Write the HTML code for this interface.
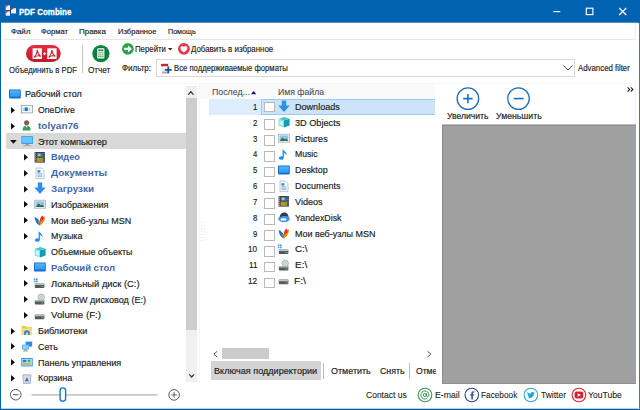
<!DOCTYPE html>
<html><head><meta charset="utf-8"><title>PDF Combine</title>
<style>
*{margin:0;padding:0;box-sizing:border-box}
html,body{width:640px;height:410px;overflow:hidden;background:#fff}
body{font-family:"Liberation Sans",sans-serif;font-size:8.8px;color:#1c1c1c;position:relative}
.a{position:absolute}
.t{position:absolute;white-space:pre;line-height:12px;height:12px;transform-origin:0 50%}
svg{position:absolute;overflow:visible}
</style></head><body>

<div class="a" style="left:0px;top:0px;width:640px;height:410px;background:#0063b1;"></div>
<div class="a" style="left:1px;top:22px;width:637px;height:387px;background:#fff;"></div>
<div class="a" style="left:1px;top:22px;width:637px;height:1px;background:#4a90c8;"></div>
<div class="a" style="left:1px;top:408px;width:638px;height:1px;background:#b2d0e9;"></div>
<div class="a" style="left:637px;top:23px;width:1px;height:385px;background:#fff;"></div>
<div class="a" style="left:638px;top:23px;width:1px;height:386px;background:#fff;"></div>
<div class="t" style="left:18.60px;top:6.47px;font-size:9.1px;color:#fff;transform:scaleX(0.8782);font-weight:bold;-webkit-text-stroke:0.3px #fff;">PDF Combine</div>
<svg style="left:5px;top:5px" width="12" height="11" viewBox="5 5 12 11">
<path d="M9 9L12 11L9 13" stroke="#0a3f86" stroke-width="1.4" fill="none"/>
<rect x="5.7" y="5.3" width="4.3" height="4.7" fill="#f6f2f2"/><path d="M5.5 5.2H8.6L5.5 7.4Z" fill="#d8302e"/>
<rect x="11" y="8.2" width="5" height="5.2" fill="#f6f2f2"/><path d="M10.8 8.1H14.2L10.8 10.3Z" fill="#d8302e"/>
<rect x="5.7" y="11.3" width="4.3" height="4.4" fill="#f6f2f2"/><path d="M5.5 11.2H8.6L5.5 13.4Z" fill="#d8302e"/>
</svg>
<svg style="left:540px;top:0" width="100" height="23" viewBox="0 0 100 23" fill="none" stroke="#fff" stroke-width="1.15">
<path d="M13.4 11.6H20.3"/><rect x="46.3" y="8.2" width="6.6" height="6.4"/><path d="M79.2 8L86.3 15M86.3 8L79.2 15"/></svg>
<div class="t" style="left:10.61px;top:26.05px;font-size:7.9px;color:#1c1c1c;transform:scaleX(0.9953);-webkit-text-stroke:0.17px #1c1c1c;">Файл</div>
<div class="t" style="left:40.92px;top:26.05px;font-size:7.9px;color:#1c1c1c;transform:scaleX(0.9638);-webkit-text-stroke:0.17px #1c1c1c;">Формат</div>
<div class="t" style="left:79.30px;top:26.05px;font-size:7.9px;color:#1c1c1c;transform:scaleX(1.0097);-webkit-text-stroke:0.17px #1c1c1c;">Правка</div>
<div class="t" style="left:117.62px;top:26.05px;font-size:7.9px;color:#1c1c1c;transform:scaleX(0.9629);-webkit-text-stroke:0.17px #1c1c1c;">Избранное</div>
<div class="t" style="left:167.94px;top:26.05px;font-size:7.9px;color:#1c1c1c;transform:scaleX(0.9059);-webkit-text-stroke:0.17px #1c1c1c;">Помощь</div>
<div class="a" style="left:4px;top:39px;width:631px;height:1px;background:#e6e6e6;"></div>
<div class="a" style="left:634.8px;top:23px;width:1px;height:16px;background:#ececec;"></div>
<svg style="left:25.7px;top:45px" width="35" height="17" viewBox="0 0 35 17">
<defs><linearGradient id="pg" x1="0" y1="0" x2="0" y2="1"><stop offset="0" stop-color="#e2313f"/><stop offset="1" stop-color="#c4182a"/></linearGradient></defs>
<rect x="0" y="0" width="34.7" height="17" rx="8.5" fill="url(#pg)"/>
<rect x="6.6" y="3.3" width="9.3" height="10.7" fill="#fff"/><rect x="21.2" y="3.3" width="9.4" height="10.7" fill="#fff"/>
<path d="M8.4 12.2C9.8 10.6 11 8 11.2 5.2C11.6 8 12.6 10 14.4 11.2C12.4 10.4 10.2 10.8 8.4 12.2Z" stroke="#c8202e" stroke-width="1.1" fill="none" stroke-linejoin="round"/>
<path d="M23 12.2C24.4 10.6 25.6 8 25.8 5.2C26.2 8 27.2 10 29 11.2C27 10.4 24.8 10.8 23 12.2Z" stroke="#c8202e" stroke-width="1.1" fill="none" stroke-linejoin="round"/>
<path d="M17.2 8.7H20M18.6 7.3V10.1" stroke="#fff" stroke-width="1"/>
</svg>
<div class="t" style="left:8.61px;top:64.36px;font-size:8.6px;color:#1c1c1c;transform:scaleX(0.8988);-webkit-text-stroke:0.15px #1c1c1c;">Объединить в PDF</div>
<div class="a" style="left:82px;top:44.5px;width:1px;height:28.5px;background:#c4c4c4;"></div>
<svg style="left:91.9px;top:45.3px" width="18" height="18" viewBox="0 0 18 18">
<circle cx="8.9" cy="8.6" r="8.7" fill="#0f8a44"/><circle cx="8.9" cy="8.6" r="7.3" fill="#0b7b3a"/>
<rect x="5.2" y="3.3" width="7.2" height="10.2" rx="0.9" fill="#fff"/>
<rect x="6.1" y="4.5" width="5.4" height="1.7" fill="#2f8f58"/>
<path d="M6.1 7.9H11.5M6.1 9.8H11.5M6.1 11.7H11.5" stroke="#5aa87a" stroke-width="1.2"/>
<path d="M7.9 7.2V12.4M9.7 7.2V12.4" stroke="#fff" stroke-width="0.5"/>
</svg>
<div class="t" style="left:88.29px;top:64.36px;font-size:8.6px;color:#1c1c1c;transform:scaleX(0.9495);-webkit-text-stroke:0.15px #1c1c1c;">Отчет</div>
<svg style="left:121.6px;top:43.2px" width="12" height="12" viewBox="0 0 12 12">
<circle cx="5.9" cy="5.9" r="5.9" fill="#2ea44a"/>
<path d="M2.2 4.7H6V2.6L10 5.9L6 9.2V7.1H2.2Z" fill="#fff"/></svg>
<div class="t" style="left:134.91px;top:43.15px;font-size:8.3px;color:#1c1c1c;transform:scaleX(0.9405);-webkit-text-stroke:0.15px #1c1c1c;">Перейти</div>
<svg style="left:167.6px;top:48.3px" width="5" height="3" viewBox="0 0 5 3"><path d="M0 0H4.4L2.2 2.6Z" fill="#222"/></svg>
<svg style="left:177.9px;top:43.1px" width="12" height="12" viewBox="0 0 12 12">
<circle cx="5.9" cy="5.9" r="5.9" fill="#e8364d"/>
<path d="M5.9 9.6C3.6 7.8 2.4 6.6 2.4 5.1C2.4 3.9 3.3 3.1 4.3 3.1C5 3.1 5.6 3.5 5.9 4.1C6.2 3.5 6.8 3.1 7.5 3.1C8.5 3.1 9.4 3.9 9.4 5.1C9.4 6.6 8.2 7.8 5.9 9.6Z" fill="#fff"/></svg>
<div class="t" style="left:191.21px;top:43.15px;font-size:8.3px;color:#1c1c1c;transform:scaleX(0.9517);-webkit-text-stroke:0.15px #1c1c1c;">Добавить в избранное</div>
<div class="t" style="left:121.80px;top:62.15px;font-size:8.3px;color:#1c1c1c;transform:scaleX(0.9617);-webkit-text-stroke:0.15px #1c1c1c;">Фильтр:</div>
<div class="a" style="left:156px;top:59px;width:419px;height:18px;background:#fff;border:1px solid #d9d9d9"></div>
<svg style="left:160px;top:62.6px" width="12" height="11" viewBox="0 0 12 11">
<path d="M1.5 0.5H8.5V10.5H2.5Z" fill="#f3f3f3" stroke="#ccc" stroke-width="0.5"/>
<rect x="1" y="1" width="7" height="2.2" fill="#c9232f"/>
<rect x="2" y="8.6" width="6" height="1.6" fill="#aaa"/>
<path d="M8.3 3.5V10.3M4.9 6.9H11.7" stroke="#1b4f9c" stroke-width="1.8"/>
</svg>
<div class="t" style="left:174.02px;top:62.15px;font-size:8.3px;color:#1c1c1c;transform:scaleX(0.9276);-webkit-text-stroke:0.15px #1c1c1c;">Все поддерживаемые форматы</div>
<svg style="left:562.5px;top:64.5px" width="10" height="6" viewBox="0 0 10 6"><path d="M0.5 0.5L5 5L9.5 0.5" fill="none" stroke="#444" stroke-width="1"/></svg>
<div class="t" style="left:578.11px;top:62.15px;font-size:8.3px;color:#1c1c1c;transform:scaleX(0.9443);-webkit-text-stroke:0.15px #1c1c1c;">Advanced filter</div>
<div class="a" style="left:1px;top:83px;width:634.5px;height:1px;background:#f5f5f5;"></div>
<div class="a" style="left:635px;top:83px;width:1px;height:42px;background:#f3f3f3;"></div>
<div class="a" style="left:6.3px;top:133.2px;width:180px;height:15.8px;background:#d9d9d9;"></div>
<svg style="left:8.60px;top:88.70px" width="12" height="10.6" viewBox="0 0 12 10.6"><rect x="0" y="0.6" width="11.8" height="8.8" rx="0.8" fill="#1570c8"/><rect x="1" y="1.5" width="9.8" height="6" fill="#35a4fa"/><rect x="1" y="1.5" width="9.8" height="2.4" fill="#4ab0fc"/></svg>
<div class="t" style="left:24.55px;top:88.37px;font-size:9.4px;color:#1c1c1c;transform:scaleX(0.9663);-webkit-text-stroke:0.17px #1c1c1c;">Рабочий стол</div>
<svg style="left:11px;top:106.78px" width="5" height="7" viewBox="0 0 5 7"><path d="M0 0L4 3.2L0 6.4Z" fill="#111"/></svg>
<svg style="left:21.20px;top:104.48px" width="12" height="10.6" viewBox="0 0 12 10.6"><rect x="0.3" y="1.3" width="11" height="7.6" fill="#fdfdfd" stroke="#8a8a8a" stroke-width="0.7"/><rect x="3.6" y="3.4" width="3.2" height="3.6" fill="#1d6fd8"/><rect x="7.6" y="3.4" width="2" height="3.6" fill="#c8d4e4"/><rect x="1.6" y="3.4" width="1.4" height="3.6" fill="#c8d4e4"/></svg>
<div class="t" style="left:37.86px;top:104.15px;font-size:9.4px;color:#1c1c1c;transform:scaleX(0.9285);-webkit-text-stroke:0.17px #1c1c1c;">OneDrive</div>
<svg style="left:11px;top:122.56px" width="5" height="7" viewBox="0 0 5 7"><path d="M0 0L4 3.2L0 6.4Z" fill="#111"/></svg>
<svg style="left:21.20px;top:120.26px" width="12" height="10.6" viewBox="0 0 12 10.6"><circle cx="5.6" cy="2.8" r="2.5" fill="#8a5a3c"/><path d="M1.6 10.4C1.6 6.8 3.4 5.4 5.6 5.4C7.8 5.4 9.6 6.8 9.6 10.4Z" fill="#3a9a5c"/><path d="M4.4 5.6L5.6 8L6.8 5.6Z" fill="#e8e8e8"/></svg>
<div class="t" style="left:37.80px;top:119.93px;font-size:9.4px;color:#4565aa;transform:scaleX(1.0691);font-weight:bold;">tolyan76</div>
<svg style="left:9.8px;top:139.74px" width="7" height="4" viewBox="0 0 7 4"><path d="M0 0H6.8L3.4 3.8Z" fill="#111"/></svg>
<svg style="left:21.20px;top:136.04px" width="12" height="10.6" viewBox="0 0 12 10.6"><rect x="0.4" y="0" width="11.6" height="8" rx="0.6" fill="#3aa0ee"/><rect x="1.2" y="0.8" width="10" height="6" fill="#6ec4fa"/><rect x="4.4" y="8" width="3.6" height="1.2" fill="#8aa"/><rect x="2.2" y="9.2" width="8" height="0.9" fill="#9ab"/></svg>
<div class="t" style="left:37.84px;top:135.71px;font-size:9.4px;color:#1c1c1c;transform:scaleX(0.9838);-webkit-text-stroke:0.17px #1c1c1c;">Этот компьютер</div>
<svg style="left:24.4px;top:154.12px" width="5" height="7" viewBox="0 0 5 7"><path d="M0 0L4 3.2L0 6.4Z" fill="#111"/></svg>
<svg style="left:34.40px;top:151.82px" width="12" height="10.6" viewBox="0 0 12 10.6"><rect x="0.6" y="0" width="10.4" height="10.6" fill="#3c3c40"/><rect x="2.6" y="0.9" width="6.4" height="4.1" fill="#2a6ad8"/><rect x="2.6" y="5.7" width="6.4" height="4.1" fill="#d88a1a"/><rect x="3.8" y="1.7" width="2.8" height="2.4" fill="#e8c03a"/><rect x="5.4" y="6.5" width="2.8" height="2.2" fill="#3ac05a"/><path d="M1.1 1.2H2M1.1 3.2H2M1.1 5.2H2M1.1 7.2H2M1.1 9.2H2M9.6 1.2H10.5M9.6 3.2H10.5M9.6 5.2H10.5M9.6 7.2H10.5M9.6 9.2H10.5" stroke="#ddd" stroke-width="0.8"/></svg>
<div class="t" style="left:50.74px;top:151.49px;font-size:9.4px;color:#4565aa;transform:scaleX(0.9809);font-weight:bold;">Видео</div>
<svg style="left:24.4px;top:169.90px" width="5" height="7" viewBox="0 0 5 7"><path d="M0 0L4 3.2L0 6.4Z" fill="#111"/></svg>
<svg style="left:34.40px;top:167.60px" width="12" height="10.6" viewBox="0 0 12 10.6"><path d="M2 0H7.6L10 2.4V10.6H2Z" fill="#fbfbfb" stroke="#a8b4c0" stroke-width="0.7"/><rect x="3.4" y="2.2" width="3" height="2.4" fill="#3a8ae0"/><path d="M3.4 5.8H8.4M3.4 7.2H8.4M3.4 8.6H8.4" stroke="#7aa8d8" stroke-width="0.8"/></svg>
<div class="t" style="left:50.70px;top:167.27px;font-size:9.4px;color:#4565aa;transform:scaleX(1.0637);font-weight:bold;">Документы</div>
<svg style="left:24.4px;top:185.68px" width="5" height="7" viewBox="0 0 5 7"><path d="M0 0L4 3.2L0 6.4Z" fill="#111"/></svg>
<svg style="left:34.40px;top:183.38px" width="12" height="10.6" viewBox="0 0 12 10.6"><path d="M3.8 -0.4H8.2V4.6H11.8L6 11L0.2 4.6H3.8Z" fill="#2f8fe6"/></svg>
<div class="t" style="left:50.71px;top:183.05px;font-size:9.4px;color:#4565aa;transform:scaleX(1.0530);font-weight:bold;">Загрузки</div>
<svg style="left:24.4px;top:201.46px" width="5" height="7" viewBox="0 0 5 7"><path d="M0 0L4 3.2L0 6.4Z" fill="#111"/></svg>
<svg style="left:34.40px;top:199.16px" width="12" height="10.6" viewBox="0 0 12 10.6"><rect x="0.3" y="1.2" width="11.2" height="8" fill="#f4f4f4" stroke="#9aa" stroke-width="0.7"/><rect x="1.6" y="2.4" width="8.6" height="5.6" fill="#8ec4ee"/><path d="M1.6 8L4.6 4.6L7 6.6L8.4 5.6L10.2 8Z" fill="#3a6a4a"/></svg>
<div class="t" style="left:50.74px;top:198.83px;font-size:9.4px;color:#1c1c1c;transform:scaleX(0.9772);-webkit-text-stroke:0.17px #1c1c1c;">Изображения</div>
<svg style="left:24.4px;top:217.24px" width="5" height="7" viewBox="0 0 5 7"><path d="M0 0L4 3.2L0 6.4Z" fill="#111"/></svg>
<svg style="left:34.40px;top:214.94px" width="12" height="10.6" viewBox="0 0 12 10.6"><path d="M5.8 10.4C3 9.4 1 6 0.6 2.2C3 2.6 5 4.6 5.8 7Z" fill="#2a6ae0"/><path d="M5.8 10.4C8.6 9.4 10.8 6 11.2 1.6C8.6 2.2 6.4 4.4 5.8 7Z" fill="#f08a1a"/><path d="M5.8 7C5.4 4.6 6.6 1.6 8.6 0.4C9.4 1.6 10 3 9.6 4.2Z" fill="#e8302a"/><path d="M5.8 10.4C4.6 9.4 3.4 7.4 3.6 5.2C4.8 5.6 5.6 6.4 5.8 7.6Z" fill="#3ab04a"/></svg>
<div class="t" style="left:50.75px;top:214.61px;font-size:9.4px;color:#1c1c1c;transform:scaleX(0.9547);-webkit-text-stroke:0.17px #1c1c1c;">Мои веб-узлы MSN</div>
<svg style="left:24.4px;top:233.02px" width="5" height="7" viewBox="0 0 5 7"><path d="M0 0L4 3.2L0 6.4Z" fill="#111"/></svg>
<svg style="left:34.40px;top:230.72px" width="12" height="10.6" viewBox="0 0 12 10.6"><path d="M4.6 -0.2C5.2 2 9.2 2.6 8.4 6.6C7.8 5 6.8 4.2 5.9 4V8.4C5.9 9.8 4.6 10.8 3.1 10.8C1.8 10.8 0.9 10.1 0.9 9.1C0.9 8 2 7.2 3.3 7.2C3.8 7.2 4.2 7.3 4.6 7.5Z" fill="#1e8ef0"/></svg>
<div class="t" style="left:50.76px;top:230.39px;font-size:9.4px;color:#1c1c1c;transform:scaleX(0.9459);-webkit-text-stroke:0.17px #1c1c1c;">Музыка</div>
<svg style="left:34.40px;top:246.50px" width="12" height="10.6" viewBox="0 0 12 10.6"><path d="M0.6 2L6 3.2V10.6L0.6 8.6Z" fill="#86dfe8"/><path d="M6 3.2L11.6 1.8V8.4L6 10.6Z" fill="#149cb2"/><path d="M0.6 2L6.2 0.1L11.6 1.8L6 3.2Z" fill="#3fc6d6"/><path d="M1.6 3.5L5 4.2V8.8L1.6 7.7Z" fill="#c8f2f6"/></svg>
<div class="t" style="left:50.76px;top:246.17px;font-size:9.4px;color:#1c1c1c;transform:scaleX(0.9442);-webkit-text-stroke:0.17px #1c1c1c;">Объемные объекты</div>
<svg style="left:24.4px;top:264.58px" width="5" height="7" viewBox="0 0 5 7"><path d="M0 0L4 3.2L0 6.4Z" fill="#111"/></svg>
<svg style="left:34.40px;top:262.28px" width="12" height="10.6" viewBox="0 0 12 10.6"><rect x="0" y="0.6" width="11.8" height="8.8" rx="0.8" fill="#1570c8"/><rect x="1" y="1.5" width="9.8" height="6" fill="#35a4fa"/><rect x="1" y="1.5" width="9.8" height="2.4" fill="#4ab0fc"/></svg>
<div class="t" style="left:50.73px;top:261.95px;font-size:9.4px;color:#4565aa;transform:scaleX(1.0100);font-weight:bold;">Рабочий стол</div>
<svg style="left:24.4px;top:280.36px" width="5" height="7" viewBox="0 0 5 7"><path d="M0 0L4 3.2L0 6.4Z" fill="#111"/></svg>
<svg style="left:34.40px;top:278.06px" width="12" height="10.6" viewBox="0 0 12 10.6"><rect x="0.8" y="5.4" width="9.6" height="4.6" rx="0.7" fill="#55595d"/><rect x="0.8" y="5.4" width="9.6" height="1.6" rx="0.6" fill="#c0c4c8"/><rect x="7.6" y="8" width="2" height="1" fill="#3ad04a"/><rect x="-0.2" y="0.4" width="1.7" height="1.7" fill="#35a8f0"/><rect x="2" y="0.4" width="1.7" height="1.7" fill="#35a8f0"/><rect x="-0.2" y="2.6" width="1.7" height="1.7" fill="#35a8f0"/><rect x="2" y="2.6" width="1.7" height="1.7" fill="#35a8f0"/></svg>
<div class="t" style="left:50.73px;top:277.73px;font-size:9.4px;color:#1c1c1c;transform:scaleX(0.9982);-webkit-text-stroke:0.17px #1c1c1c;">Локальный диск (C:)</div>
<svg style="left:24.4px;top:296.14px" width="5" height="7" viewBox="0 0 5 7"><path d="M0 0L4 3.2L0 6.4Z" fill="#111"/></svg>
<svg style="left:34.40px;top:293.84px" width="12" height="10.6" viewBox="0 0 12 10.6"><rect x="0.8" y="6" width="9.6" height="4.4" rx="0.7" fill="#55595d"/><rect x="0.8" y="6" width="9.6" height="1.5" rx="0.6" fill="#b4b8bc"/><rect x="7.6" y="8.5" width="2" height="1" fill="#3ad04a"/><circle cx="7.2" cy="3.3" r="3.2" fill="#dcdee2" stroke="#8a8e92" stroke-width="0.6"/><circle cx="7.2" cy="3.3" r="1.1" fill="#fff" stroke="#8a8e92" stroke-width="0.5"/></svg>
<div class="t" style="left:50.75px;top:293.51px;font-size:9.4px;color:#1c1c1c;transform:scaleX(0.9659);-webkit-text-stroke:0.17px #1c1c1c;">DVD RW дисковод (E:)</div>
<svg style="left:24.4px;top:311.92px" width="5" height="7" viewBox="0 0 5 7"><path d="M0 0L4 3.2L0 6.4Z" fill="#111"/></svg>
<svg style="left:34.40px;top:309.62px" width="12" height="10.6" viewBox="0 0 12 10.6"><rect x="0.8" y="4.6" width="9.6" height="4.6" rx="0.7" fill="#55595d"/><rect x="0.8" y="4.6" width="9.6" height="1.6" rx="0.6" fill="#c0c4c8"/><rect x="7.6" y="7.2" width="2" height="1" fill="#3ad04a"/></svg>
<div class="t" style="left:50.72px;top:309.29px;font-size:9.4px;color:#1c1c1c;transform:scaleX(1.0314);-webkit-text-stroke:0.17px #1c1c1c;">Volume (F:)</div>
<svg style="left:11px;top:327.70px" width="5" height="7" viewBox="0 0 5 7"><path d="M0 0L4 3.2L0 6.4Z" fill="#111"/></svg>
<svg style="left:21.20px;top:325.40px" width="12" height="10.6" viewBox="0 0 12 10.6"><path d="M0.6 1H4.4L5.4 2.2H11V10H0.6Z" fill="#f2c648"/><rect x="0.6" y="3.2" width="10.4" height="6.8" fill="#f9dc74"/><path d="M3 10V6.6L5.9 5L8.8 6.6V10H6.9V7.8H4.9V10Z" fill="#2a8ae8"/></svg>
<div class="t" style="left:37.84px;top:325.07px;font-size:9.4px;color:#1c1c1c;transform:scaleX(0.9701);-webkit-text-stroke:0.17px #1c1c1c;">Библиотеки</div>
<svg style="left:11px;top:343.48px" width="5" height="7" viewBox="0 0 5 7"><path d="M0 0L4 3.2L0 6.4Z" fill="#111"/></svg>
<svg style="left:21.20px;top:341.18px" width="12" height="10.6" viewBox="0 0 12 10.6"><rect x="4.6" y="0.6" width="6.6" height="5" fill="#2a8ae8"/><rect x="1" y="3.6" width="7" height="5" fill="#5ab0f4"/><rect x="1.8" y="4.3" width="5.4" height="3.4" fill="#8ad0fa"/><rect x="3.2" y="8.6" width="2.6" height="1" fill="#789"/><rect x="2" y="9.6" width="5" height="0.8" fill="#89a"/></svg>
<div class="t" style="left:37.85px;top:340.85px;font-size:9.4px;color:#1c1c1c;transform:scaleX(0.9481);-webkit-text-stroke:0.17px #1c1c1c;">Сеть</div>
<svg style="left:11px;top:359.26px" width="5" height="7" viewBox="0 0 5 7"><path d="M0 0L4 3.2L0 6.4Z" fill="#111"/></svg>
<svg style="left:21.20px;top:356.96px" width="12" height="10.6" viewBox="0 0 12 10.6"><rect x="0.3" y="1" width="11.4" height="8.4" fill="#2a8ae8"/><rect x="1.2" y="1.9" width="9.6" height="6.6" fill="#bfe2fa"/><rect x="2" y="2.8" width="3.4" height="2.4" fill="#2a7ad0"/><circle cx="8" cy="4" r="1.4" fill="#3ab05a"/><rect x="2" y="6" width="7.6" height="1.6" fill="#e8a02a"/></svg>
<div class="t" style="left:37.85px;top:356.63px;font-size:9.4px;color:#1c1c1c;transform:scaleX(0.9669);-webkit-text-stroke:0.17px #1c1c1c;">Панель управления</div>
<svg style="left:11px;top:375.04px" width="5" height="7" viewBox="0 0 5 7"><path d="M0 0L4 3.2L0 6.4Z" fill="#111"/></svg>
<svg style="left:21.20px;top:372.74px" width="12" height="10.6" viewBox="0 0 12 10.6"><path d="M1.8 1.8H10L9.3 10.4H2.5Z" fill="#d6dade" stroke="#98a0a8" stroke-width="0.7"/><path d="M5.9 4.2L8 8.2H3.8Z" fill="#2a7ae0"/></svg>
<div class="t" style="left:37.85px;top:372.41px;font-size:9.4px;color:#1c1c1c;transform:scaleX(0.9596);-webkit-text-stroke:0.17px #1c1c1c;">Корзина</div>
<div class="a" style="left:185.9px;top:86px;width:10.9px;height:295.5px;background:#f0f0f0;"></div>
<div class="a" style="left:185.9px;top:98px;width:10.9px;height:232px;background:#cdcdcd;"></div>
<svg style="left:188.4px;top:90.6px" width="6" height="4" viewBox="0 0 6 4"><path d="M0.3 3.6L2.9 0.8L5.5 3.6" fill="none" stroke="#333" stroke-width="1.3"/></svg>
<svg style="left:188.6px;top:373.8px" width="6" height="4" viewBox="0 0 6 4"><path d="M0.3 0.4L2.7 3L5.1 0.4" fill="none" stroke="#333" stroke-width="1.2"/></svg>
<div class="a" style="left:199px;top:84px;width:1px;height:300px;background:#f6f6f6;"></div>
<svg style="left:0;top:384px" width="200" height="24" viewBox="0 384 200 24">
<path d="M31.5 394.8H157.6" stroke="#c9c9c9" stroke-width="1.8"/>
<circle cx="15.75" cy="394.7" r="5.3" fill="#fff" stroke="#505c6a" stroke-width="1"/><path d="M13 394.7H18.5" stroke="#5a6472" stroke-width="1.1"/>
<circle cx="174.1" cy="394.9" r="5.3" fill="#fff" stroke="#505c6a" stroke-width="1"/><path d="M171.3 394.9H176.9M174.1 392.1V397.7" stroke="#5a6472" stroke-width="1"/>
<rect x="60.1" y="387.9" width="5.5" height="13.3" rx="2.6" fill="#fff" stroke="#0a78d6" stroke-width="1.4"/>
</svg>
<div class="a" style="left:200px;top:84px;width:235.4px;height:15.4px;background:#fafafa;"></div>
<div class="t" style="left:212.46px;top:86.17px;font-size:9.2px;color:#4a4f5a;transform:scaleX(0.9560);-webkit-text-stroke:0.1px #4a4f5a;">Послед...</div>
<svg style="left:251.4px;top:90.5px" width="6" height="4" viewBox="0 0 6 4"><path d="M0 3.2L2.65 0L5.3 3.2Z" fill="#12128c"/></svg>
<div class="t" style="left:278.07px;top:86.17px;font-size:9.2px;color:#4a4f5a;transform:scaleX(0.9453);-webkit-text-stroke:0.1px #4a4f5a;">Имя файла</div>
<div class="a" style="left:209px;top:99.4px;width:226.3px;height:15.6px;background:#ddedfd;"></div>
<div class="a" style="left:261.4px;top:99.4px;width:173.9px;height:15.6px;background:#cce4fa;border-top:1px solid #9ccbf2;border-bottom:1px solid #9ccbf2;border-left:1px solid #9ccbf2"></div>
<div class="t" style="left:252.91px;top:100.92px;font-size:9.4px;color:#1c1c1c;transform:scaleX(0.8196);-webkit-text-stroke:0.17px #1c1c1c;">1</div>
<div class="a" style="left:264px;top:101.75px;width:11px;height:10.7px;background:#fff;border:1px solid #b9b9b9"></div>
<svg style="left:277.70px;top:101.35px" width="12" height="10.6" viewBox="0 0 12 10.6"><path d="M3.8 -0.4H8.2V4.6H11.8L6 11L0.2 4.6H3.8Z" fill="#2f8fe6"/></svg>
<div class="t" style="left:294.55px;top:100.92px;font-size:9.4px;color:#1c1c1c;transform:scaleX(0.9652);-webkit-text-stroke:0.17px #1c1c1c;">Downloads</div>
<div class="t" style="left:252.91px;top:116.75px;font-size:9.4px;color:#1c1c1c;transform:scaleX(0.8196);-webkit-text-stroke:0.17px #1c1c1c;">2</div>
<div class="a" style="left:264px;top:119.28px;width:11px;height:10.7px;background:#fff;border:1px solid #b9b9b9"></div>
<svg style="left:277.70px;top:117.18px" width="12" height="10.6" viewBox="0 0 12 10.6"><path d="M0.6 2L6 3.2V10.6L0.6 8.6Z" fill="#86dfe8"/><path d="M6 3.2L11.6 1.8V8.4L6 10.6Z" fill="#149cb2"/><path d="M0.6 2L6.2 0.1L11.6 1.8L6 3.2Z" fill="#3fc6d6"/><path d="M1.6 3.5L5 4.2V8.8L1.6 7.7Z" fill="#c8f2f6"/></svg>
<div class="t" style="left:294.54px;top:116.75px;font-size:9.4px;color:#1c1c1c;transform:scaleX(0.9763);-webkit-text-stroke:0.17px #1c1c1c;">3D Objects</div>
<div class="t" style="left:252.91px;top:132.58px;font-size:9.4px;color:#1c1c1c;transform:scaleX(0.8196);-webkit-text-stroke:0.17px #1c1c1c;">3</div>
<div class="a" style="left:264px;top:135.10999999999999px;width:11px;height:10.7px;background:#fff;border:1px solid #b9b9b9"></div>
<svg style="left:277.70px;top:133.01px" width="12" height="10.6" viewBox="0 0 12 10.6"><rect x="0.3" y="1.2" width="11.2" height="8" fill="#f4f4f4" stroke="#9aa" stroke-width="0.7"/><rect x="1.6" y="2.4" width="8.6" height="5.6" fill="#8ec4ee"/><path d="M1.6 8L4.6 4.6L7 6.6L8.4 5.6L10.2 8Z" fill="#3a6a4a"/></svg>
<div class="t" style="left:294.55px;top:132.58px;font-size:9.4px;color:#1c1c1c;transform:scaleX(0.9646);-webkit-text-stroke:0.17px #1c1c1c;">Pictures</div>
<div class="t" style="left:252.91px;top:148.41px;font-size:9.4px;color:#1c1c1c;transform:scaleX(0.8196);-webkit-text-stroke:0.17px #1c1c1c;">4</div>
<div class="a" style="left:264px;top:150.94px;width:11px;height:10.7px;background:#fff;border:1px solid #b9b9b9"></div>
<svg style="left:277.70px;top:148.84px" width="12" height="10.6" viewBox="0 0 12 10.6"><path d="M4.6 -0.2C5.2 2 9.2 2.6 8.4 6.6C7.8 5 6.8 4.2 5.9 4V8.4C5.9 9.8 4.6 10.8 3.1 10.8C1.8 10.8 0.9 10.1 0.9 9.1C0.9 8 2 7.2 3.3 7.2C3.8 7.2 4.2 7.3 4.6 7.5Z" fill="#1e8ef0"/></svg>
<div class="t" style="left:294.57px;top:148.41px;font-size:9.4px;color:#1c1c1c;transform:scaleX(0.9221);-webkit-text-stroke:0.17px #1c1c1c;">Music</div>
<div class="t" style="left:252.91px;top:164.24px;font-size:9.4px;color:#1c1c1c;transform:scaleX(0.8196);-webkit-text-stroke:0.17px #1c1c1c;">5</div>
<div class="a" style="left:264px;top:166.76999999999998px;width:11px;height:10.7px;background:#fff;border:1px solid #b9b9b9"></div>
<svg style="left:277.70px;top:164.67px" width="12" height="10.6" viewBox="0 0 12 10.6"><rect x="0" y="0.6" width="11.8" height="8.8" rx="0.8" fill="#1570c8"/><rect x="1" y="1.5" width="9.8" height="6" fill="#35a4fa"/><rect x="1" y="1.5" width="9.8" height="2.4" fill="#4ab0fc"/></svg>
<div class="t" style="left:294.55px;top:164.24px;font-size:9.4px;color:#1c1c1c;transform:scaleX(0.9497);-webkit-text-stroke:0.17px #1c1c1c;">Desktop</div>
<div class="t" style="left:252.91px;top:180.07px;font-size:9.4px;color:#1c1c1c;transform:scaleX(0.8196);-webkit-text-stroke:0.17px #1c1c1c;">6</div>
<div class="a" style="left:264px;top:182.6px;width:11px;height:10.7px;background:#fff;border:1px solid #b9b9b9"></div>
<svg style="left:277.70px;top:180.50px" width="12" height="10.6" viewBox="0 0 12 10.6"><path d="M2 0H7.6L10 2.4V10.6H2Z" fill="#fbfbfb" stroke="#a8b4c0" stroke-width="0.7"/><rect x="3.4" y="2.2" width="3" height="2.4" fill="#3a8ae0"/><path d="M3.4 5.8H8.4M3.4 7.2H8.4M3.4 8.6H8.4" stroke="#7aa8d8" stroke-width="0.8"/></svg>
<div class="t" style="left:294.55px;top:180.07px;font-size:9.4px;color:#1c1c1c;transform:scaleX(0.9590);-webkit-text-stroke:0.17px #1c1c1c;">Documents</div>
<div class="t" style="left:252.91px;top:195.90px;font-size:9.4px;color:#1c1c1c;transform:scaleX(0.8196);-webkit-text-stroke:0.17px #1c1c1c;">7</div>
<div class="a" style="left:264px;top:198.43px;width:11px;height:10.7px;background:#fff;border:1px solid #b9b9b9"></div>
<svg style="left:277.70px;top:196.33px" width="12" height="10.6" viewBox="0 0 12 10.6"><rect x="0.6" y="0" width="10.4" height="10.6" fill="#3c3c40"/><rect x="2.6" y="0.9" width="6.4" height="4.1" fill="#2a6ad8"/><rect x="2.6" y="5.7" width="6.4" height="4.1" fill="#d88a1a"/><rect x="3.8" y="1.7" width="2.8" height="2.4" fill="#e8c03a"/><rect x="5.4" y="6.5" width="2.8" height="2.2" fill="#3ac05a"/><path d="M1.1 1.2H2M1.1 3.2H2M1.1 5.2H2M1.1 7.2H2M1.1 9.2H2M9.6 1.2H10.5M9.6 3.2H10.5M9.6 5.2H10.5M9.6 7.2H10.5M9.6 9.2H10.5" stroke="#ddd" stroke-width="0.8"/></svg>
<div class="t" style="left:294.54px;top:195.90px;font-size:9.4px;color:#1c1c1c;transform:scaleX(0.9711);-webkit-text-stroke:0.17px #1c1c1c;">Videos</div>
<div class="t" style="left:252.91px;top:211.73px;font-size:9.4px;color:#1c1c1c;transform:scaleX(0.8196);-webkit-text-stroke:0.17px #1c1c1c;">8</div>
<div class="a" style="left:264px;top:214.26px;width:11px;height:10.7px;background:#fff;border:1px solid #b9b9b9"></div>
<svg style="left:277.70px;top:212.16px" width="12" height="10.6" viewBox="0 0 12 10.6"><ellipse cx="6" cy="6.8" rx="5.8" ry="3.4" fill="#3a9af0"/><path d="M1.6 5.4C1.8 2.6 4 0.6 6.4 0.6C8.6 0.6 10.4 2.4 10.6 5C8 3.6 4.2 3.8 1.6 5.4Z" fill="#2a3a4a"/><ellipse cx="5.4" cy="7.4" rx="3" ry="1.2" fill="#fff"/></svg>
<div class="t" style="left:294.56px;top:211.73px;font-size:9.4px;color:#1c1c1c;transform:scaleX(0.9422);-webkit-text-stroke:0.17px #1c1c1c;">YandexDisk</div>
<div class="t" style="left:252.91px;top:227.56px;font-size:9.4px;color:#1c1c1c;transform:scaleX(0.8196);-webkit-text-stroke:0.17px #1c1c1c;">9</div>
<div class="a" style="left:264px;top:230.08999999999997px;width:11px;height:10.7px;background:#fff;border:1px solid #b9b9b9"></div>
<svg style="left:277.70px;top:227.99px" width="12" height="10.6" viewBox="0 0 12 10.6"><path d="M5.8 10.4C3 9.4 1 6 0.6 2.2C3 2.6 5 4.6 5.8 7Z" fill="#2a6ae0"/><path d="M5.8 10.4C8.6 9.4 10.8 6 11.2 1.6C8.6 2.2 6.4 4.4 5.8 7Z" fill="#f08a1a"/><path d="M5.8 7C5.4 4.6 6.6 1.6 8.6 0.4C9.4 1.6 10 3 9.6 4.2Z" fill="#e8302a"/><path d="M5.8 10.4C4.6 9.4 3.4 7.4 3.6 5.2C4.8 5.6 5.6 6.4 5.8 7.6Z" fill="#3ab04a"/></svg>
<div class="t" style="left:294.55px;top:227.56px;font-size:9.4px;color:#1c1c1c;transform:scaleX(0.9570);-webkit-text-stroke:0.17px #1c1c1c;">Мои веб-узлы MSN</div>
<div class="t" style="left:248.09px;top:243.39px;font-size:9.4px;color:#1c1c1c;transform:scaleX(0.8698);-webkit-text-stroke:0.17px #1c1c1c;">10</div>
<div class="a" style="left:264px;top:245.92px;width:11px;height:10.7px;background:#fff;border:1px solid #b9b9b9"></div>
<svg style="left:277.70px;top:243.82px" width="12" height="10.6" viewBox="0 0 12 10.6"><rect x="0.8" y="5.4" width="9.6" height="4.6" rx="0.7" fill="#55595d"/><rect x="0.8" y="5.4" width="9.6" height="1.6" rx="0.6" fill="#c0c4c8"/><rect x="7.6" y="8" width="2" height="1" fill="#3ad04a"/><rect x="-0.2" y="0.4" width="1.7" height="1.7" fill="#35a8f0"/><rect x="2" y="0.4" width="1.7" height="1.7" fill="#35a8f0"/><rect x="-0.2" y="2.6" width="1.7" height="1.7" fill="#35a8f0"/><rect x="2" y="2.6" width="1.7" height="1.7" fill="#35a8f0"/></svg>
<div class="t" style="left:294.51px;top:243.39px;font-size:9.4px;color:#1c1c1c;transform:scaleX(1.0494);-webkit-text-stroke:0.17px #1c1c1c;">C:\</div>
<div class="t" style="left:248.74px;top:259.22px;font-size:9.4px;color:#1c1c1c;transform:scaleX(0.8662);-webkit-text-stroke:0.17px #1c1c1c;">11</div>
<div class="a" style="left:264px;top:261.75px;width:11px;height:10.7px;background:#fff;border:1px solid #b9b9b9"></div>
<svg style="left:277.70px;top:259.65px" width="12" height="10.6" viewBox="0 0 12 10.6"><rect x="0.8" y="6" width="9.6" height="4.4" rx="0.7" fill="#55595d"/><rect x="0.8" y="6" width="9.6" height="1.5" rx="0.6" fill="#b4b8bc"/><rect x="7.6" y="8.5" width="2" height="1" fill="#3ad04a"/><circle cx="7.2" cy="3.3" r="3.2" fill="#dcdee2" stroke="#8a8e92" stroke-width="0.6"/><circle cx="7.2" cy="3.3" r="1.1" fill="#fff" stroke="#8a8e92" stroke-width="0.5"/></svg>
<div class="t" style="left:294.50px;top:259.22px;font-size:9.4px;color:#1c1c1c;transform:scaleX(1.0617);-webkit-text-stroke:0.17px #1c1c1c;">E:\</div>
<div class="t" style="left:248.09px;top:275.05px;font-size:9.4px;color:#1c1c1c;transform:scaleX(0.8698);-webkit-text-stroke:0.17px #1c1c1c;">12</div>
<div class="a" style="left:264px;top:277.58px;width:11px;height:10.7px;background:#fff;border:1px solid #b9b9b9"></div>
<svg style="left:277.70px;top:275.48px" width="12" height="10.6" viewBox="0 0 12 10.6"><rect x="0.8" y="4.6" width="9.6" height="4.6" rx="0.7" fill="#55595d"/><rect x="0.8" y="4.6" width="9.6" height="1.6" rx="0.6" fill="#c0c4c8"/><rect x="7.6" y="7.2" width="2" height="1" fill="#3ad04a"/></svg>
<div class="t" style="left:294.49px;top:275.05px;font-size:9.4px;color:#1c1c1c;transform:scaleX(1.0949);-webkit-text-stroke:0.17px #1c1c1c;">F:\</div>
<div class="a" style="left:222px;top:348px;width:47px;height:11px;background:#cbcbcb;"></div>
<svg style="left:213.4px;top:350.5px" width="5" height="7" viewBox="0 0 5 7"><path d="M4.2 0.3L0.8 3.2L4.2 6.1" fill="none" stroke="#444" stroke-width="0.9"/></svg>
<svg style="left:427px;top:350.8px" width="5" height="7" viewBox="0 0 5 7"><path d="M0.5 0.3L3.9 3.2L0.5 6.1" fill="none" stroke="#444" stroke-width="0.9"/></svg>
<div class="a" style="left:211px;top:361px;width:110px;height:18.5px;background:#d3d4d6;"></div>
<div class="t" style="left:214.35px;top:365.06px;font-size:8.8px;color:#1c1c1c;transform:scaleX(1.0320);-webkit-text-stroke:0.17px #1c1c1c;">Включая поддиректории</div>
<div class="a" style="left:323.2px;top:363px;width:1px;height:15.5px;background:#bdbdbd;"></div>
<div class="t" style="left:331.25px;top:365.06px;font-size:8.8px;color:#1c1c1c;transform:scaleX(1.0172);-webkit-text-stroke:0.17px #1c1c1c;">Отметить</div>
<div class="t" style="left:380.06px;top:365.06px;font-size:8.8px;color:#1c1c1c;transform:scaleX(1.0024);-webkit-text-stroke:0.17px #1c1c1c;">Снять</div>
<div class="a" style="left:409.2px;top:363px;width:1px;height:15.5px;background:#bdbdbd;"></div>
<div class="a" style="left:410px;top:360px;width:25.6px;height:22px;overflow:hidden">
<div class="t" style="left:5.67px;top:5.06px;font-size:8.8px;color:#1c1c1c;transform:scaleX(0.9763);-webkit-text-stroke:0.17px #1c1c1c;">Отменить</div>
</div>
<svg style="left:440px;top:84px" width="200" height="40" viewBox="440 84 200 40" fill="none">
<circle cx="467.9" cy="98.6" r="10.8" stroke="#1c70b8" stroke-width="1.3" fill="#fff"/><path d="M463.2 98.6H472.6M467.9 93.9V103.3" stroke="#1c70b8" stroke-width="1.6"/>
<circle cx="518.5" cy="98.6" r="10.8" stroke="#1c70b8" stroke-width="1.3" fill="#fff"/><path d="M513.8 98.6H523.6" stroke="#1c70b8" stroke-width="1.6"/>
</svg>
<div class="t" style="left:446.87px;top:109.76px;font-size:8.8px;color:#1c1c1c;transform:scaleX(0.9791);-webkit-text-stroke:0.17px #1c1c1c;">Увеличить</div>
<div class="t" style="left:495.56px;top:109.76px;font-size:8.8px;color:#1c1c1c;transform:scaleX(0.9909);-webkit-text-stroke:0.17px #1c1c1c;">Уменьшить</div>
<svg style="left:626.6px;top:87.4px" width="7" height="5" viewBox="0 0 7 5"><path d="M0.6 0.3L2.7 2.4L0.6 4.5M3.8 0.3L5.9 2.4L3.8 4.5" fill="none" stroke="#222" stroke-width="1.1"/></svg>
<div class="a" style="left:442px;top:124px;width:194px;height:1px;background:#bcbcbc;"></div>
<div class="a" style="left:442px;top:125px;width:194px;height:259px;background:#a0a0a0;border-top:1px solid #909090;border-left:1px solid #8a8a8a;border-bottom:1px solid #8e8e8e"></div>
<div class="t" style="left:365.97px;top:389.18px;font-size:9.7px;color:#1c1c1c;transform:scaleX(0.8786);-webkit-text-stroke:0.1px #1c1c1c;">Contact us</div>
<svg style="left:410px;top:386px" width="190" height="18" viewBox="410 386 190 18" fill="none">
<circle cx="425" cy="395" r="6.8" stroke="#3a9a4c" stroke-width="1.1" fill="#fff"/>
<circle cx="424.8" cy="395" r="1.5" stroke="#2f9448" stroke-width="1"/>
<path d="M426.7 393.2V396C426.7 397.2 428.9 397.2 428.9 394.9C428.9 392.6 427.1 391 424.9 391C422.6 391 420.9 392.8 420.9 395C420.9 397.2 422.6 399 424.9 399C425.8 399 426.6 398.8 427.3 398.3" stroke="#2f9448" stroke-width="0.95"/>
<circle cx="471.8" cy="395" r="6.8" stroke="#2f4490" stroke-width="1.1" fill="#fff"/>
<path d="M472.9 399.6V395.6H474.2L474.4 394.2H472.9V393.4C472.9 392.9 473.1 392.6 473.7 392.6H474.5V391.3C474.2 391.25 473.7 391.2 473.2 391.2C472 391.2 471.3 391.9 471.3 393.2V394.2H470V395.6H471.3V399.6Z" fill="#3b5998"/>
<circle cx="530.9" cy="395" r="6.8" stroke="#2aa3d8" stroke-width="1.1" fill="#fff"/>
<path d="M526.8 397.6C529.4 399 533.6 398 534 393.8L534.9 392.8L533.9 393L534.5 392L533.4 392.4C532.4 391.4 530.8 392.2 531 393.6C529.6 393.6 528.4 392.9 527.6 392C527.1 392.9 527.4 394 528.1 394.5L527.3 394.3C527.4 395.2 528 395.8 528.8 396.1L528.1 396.2C528.4 396.9 529 397.3 529.8 397.3C529 397.8 527.8 397.9 526.8 397.6Z" fill="#2aa3d8"/>
<circle cx="578.9" cy="395" r="6.8" stroke="#d8202a" stroke-width="1.1" fill="#fff"/>
<rect x="574.6" y="391.4" width="8.6" height="7.2" rx="2" fill="#d8202a"/><path d="M577.6 393.2L581 395L577.6 396.8Z" fill="#fff"/>
</svg>
<div class="t" style="left:434.86px;top:389.18px;font-size:9.7px;color:#1c1c1c;transform:scaleX(0.8993);-webkit-text-stroke:0.1px #1c1c1c;">E-mail</div>
<div class="t" style="left:481.39px;top:389.18px;font-size:9.7px;color:#1c1c1c;transform:scaleX(0.8529);-webkit-text-stroke:0.1px #1c1c1c;">Facebook</div>
<div class="t" style="left:540.78px;top:389.18px;font-size:9.7px;color:#1c1c1c;transform:scaleX(0.8758);-webkit-text-stroke:0.1px #1c1c1c;">Twitter</div>
<div class="t" style="left:588.27px;top:389.18px;font-size:9.7px;color:#1c1c1c;transform:scaleX(0.8900);-webkit-text-stroke:0.1px #1c1c1c;">YouTube</div>
<svg style="left:200px;top:221px" width="6" height="22" viewBox="0 0 6 22"><rect x="1.2" y="1" width="0.8" height="0.8" fill="#d8d8d8"/><rect x="3.8" y="1" width="0.8" height="0.8" fill="#d8d8d8"/><rect x="1.2" y="4" width="0.8" height="0.8" fill="#d8d8d8"/><rect x="3.8" y="4" width="0.8" height="0.8" fill="#d8d8d8"/><rect x="1.2" y="7" width="0.8" height="0.8" fill="#d8d8d8"/><rect x="3.8" y="7" width="0.8" height="0.8" fill="#d8d8d8"/><rect x="1.2" y="10" width="0.8" height="0.8" fill="#d8d8d8"/><rect x="3.8" y="10" width="0.8" height="0.8" fill="#d8d8d8"/><rect x="1.2" y="13" width="0.8" height="0.8" fill="#d8d8d8"/><rect x="3.8" y="13" width="0.8" height="0.8" fill="#d8d8d8"/><rect x="1.2" y="16" width="0.8" height="0.8" fill="#d8d8d8"/><rect x="3.8" y="16" width="0.8" height="0.8" fill="#d8d8d8"/><rect x="1.2" y="19" width="0.8" height="0.8" fill="#d8d8d8"/><rect x="3.8" y="19" width="0.8" height="0.8" fill="#d8d8d8"/></svg>
<div class="a" style="left:0px;top:409px;width:640px;height:1px;background:#0063b1;"></div>
<div class="a" style="left:639px;top:0px;width:1px;height:23px;background:#0063b1;"></div>
<div class="a" style="left:639px;top:23px;width:1px;height:387px;background:#2f80c2;"></div>
</body></html>
